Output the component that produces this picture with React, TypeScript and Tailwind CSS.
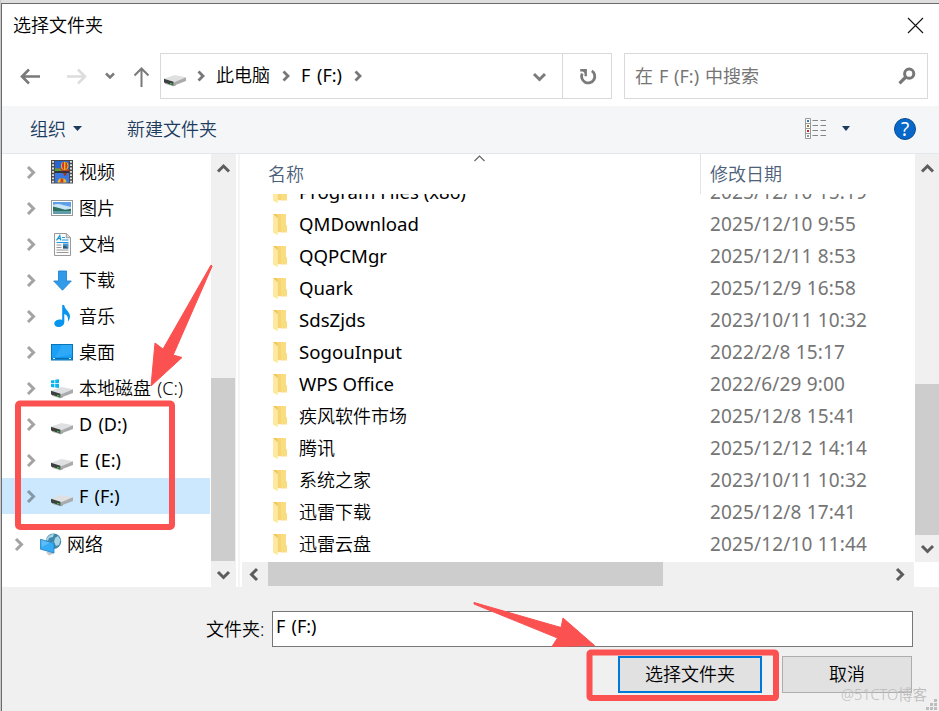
import React from "react";

type ChevronProps = { d: string; w: number; h: number; color: string; sw?: number };

function Stroke({ d, w, h, color, sw = 3 }: ChevronProps) {
  return (
    <svg width={w} height={h} viewBox={`0 0 ${w} ${h}`} className="shrink-0" fill="none" stroke={color} strokeWidth={sw}>
      <path d={d} />
    </svg>
  );
}

function Drive({ win = false }: { win?: boolean }) {
  return (
    <svg width="22" height="24" viewBox="0 0 22 24" className="shrink-0">
      {win && (
        <g fill="#0db4ec">
          <path d="M0 4.4 3.4 3.9V7.2H0ZM4.2 3.8 8 3.2V7.2H4.2ZM0 8.1H3.4V11.4L0 10.9ZM4.2 8.1H8V12.1L4.2 11.5Z" />
        </g>
      )}
      <g transform="translate(0 4)">
        <path d="M0 10.8 10.5 7 22 9.2 9.5 14.5Z" fill="#dfe0e2" />
        <path d="M9.5 14.4 22 9.2V13L9.5 17.7Z" fill="#a9abad" />
        <path d="M0 10.8 9.5 13.8V17.8L0 14.6Z" fill="#3c403e" />
        <path d="M6 14.8 8.5 15.5V16.8L6 16Z" fill="#36c43e" />
        <path d="M1 15.3 9.5 17.8 12 16.8" stroke="#777" strokeWidth=".6" fill="none" />
      </g>
    </svg>
  );
}

function Video() {
  return (
    <svg width="22" height="24" viewBox="0 0 22 24">
      <rect width="22" height="23.5" fill="#4a4a4a" />
      <rect x="4" y="1" width="14" height="10.6" fill="#2866d8" />
      <rect x="4" y="12.4" width="14" height="10.2" fill="#3978e0" />
      <path d="M4 8.8 8 8 18 9.2V11.6H4Z" fill="#c7432d" />
      <path d="M4 8.2 9 8.8 11 11.6H4Z" fill="#55a044" />
      <ellipse cx="13.7" cy="5.8" rx="3.8" ry="4.1" fill="#e7bd22" />
      <path d="M11.6 2.6Q9.8 6 12.2 9L13 9.6 13 2ZM15.5 2.5Q17.6 6 15.2 9L14.4 9.6V2Z" fill="#cf3529" />
      <path d="M4 11H18V13H4Z" fill="#333" />
      <path d="M12 13H16L14.7 15.8H13.2Z" fill="#9f3727" />
      <path d="M6.6 22.6Q6.8 18.2 11 18.2T15.5 22.6Z" fill="#e9b925" />
      <path d="M9.8 18.4H12.3V22.6H9.2Z" fill="#ca3c2c" />
      <g stroke="#eee" strokeWidth="1.8" strokeDasharray="1.8 1.5">
        <path d="M2 1V23M20 1V23" />
      </g>
    </svg>
  );
}

function Picture() {
  return (
    <svg width="22" height="18" viewBox="0 0 22 18">
      <rect x=".5" y="1.5" width="21" height="15" fill="#fff" stroke="#999" />
      <rect x="2" y="3" width="18" height="12" fill="#5f9fe8" />
      <path d="M2 6Q7 4 12 6L20 8V11H2Z" fill="#c7e5f7" />
      <path d="M2 7.5 8 9 14 10.8 20 9.8V12.5H2Z" fill="#2f6f60" />
      <path d="M2 12H20V15H2Z" fill="#5f9dab" />
    </svg>
  );
}

function Doc() {
  return (
    <svg width="17" height="23" viewBox="0 0 17 23">
      <path d="M.5.5H12.5L16.5 4.5V22.5H.5Z" fill="#fbfbfb" stroke="#999" />
      <path d="M12.3.5V4.7H16.5" fill="#ddd" stroke="#999" />
      <path d="M2.5 7.3 5.8 2.5 6.8 7.3M3.8 5.7H6.7" stroke="#1596d1" strokeWidth="1.2" fill="none" />
      <path d="M8 4.5H11M8 7H14.5M2.5 9.5H14.5" stroke="#1c9be0" />
      <path d="M2.5 12H7.5M2.5 14.5H7.5M2.5 17H14.5M2.5 19.5H14.5" stroke="#999" />
      <rect x="9" y="10.5" width="5.5" height="5" fill="#4d91cd" />
      <path d="M9 13.5 11 12.5 14.5 15.5H9Z" fill="#305d76" />
    </svg>
  );
}

function Download() {
  return (
    <svg width="19" height="21" viewBox="0 0 19 21">
      <path d="M5.5 1H13.5V11H18.3L9.5 20.2.7 11H5.5Z" fill="#319be9" stroke="#2585ce" strokeWidth=".9" />
    </svg>
  );
}

function Music() {
  return (
    <svg width="17" height="22" viewBox="0 0 17 22">
      <path d="M8.2 0H10.2C10.5 4.4 16 6.5 16 11.3 16 13.7 14.9 15.6 13.8 16.8 14.7 12.7 13.3 10 10.3 9V17C10.3 20.3 7.4 22 4.5 22 1.8 22 .3 20.5.3 18.6.3 16 3.3 14.5 6.3 14.5 7.1 14.5 7.7 14.7 8.2 14.9Z" fill="#0795ef" />
    </svg>
  );
}

function Desktop() {
  return (
    <svg width="22" height="17" viewBox="0 0 22 17">
      <rect x=".5" y=".5" width="21" height="15.5" fill="#1ba0f7" stroke="#0875b8" />
      <path d="M11 1H21V10L4 14Z" fill="#42b1fa" opacity=".5" />
      <path d="M1 14.5H21" stroke="#0870b2" strokeWidth="1.4" />
      <path d="M2 14.5H4M18 14.5H20" stroke="#d8f0ff" />
    </svg>
  );
}

function Network() {
  return (
    <svg width="22" height="23" viewBox="0 0 22 23">
      <circle cx="13.5" cy="8.3" r="7.7" fill="#3f86aa" />
      <path d="M7 5Q10 1 14 1L13 4 9 5 8 8 6 7ZM15 5 18 3 20.5 7 19 12 16 13 14 9ZM9 10 13 9 14 13 11 14Z" fill="#a6d6e5" />
      <path d="M6 19.5 12 18 14 20.5 9 22.5Z" fill="#c7c9cc" />
      <path d="M.5 6.2 14 10.3V20L.5 16.2Z" fill="#35aaf5" stroke="#2883be" strokeWidth=".8" />
      <path d="M1.2 7.2 10 9.8 2 14Z" fill="#76c9fa" opacity=".6" />
    </svg>
  );
}

function Folder() {
  return (
    <svg width="15" height="22" viewBox="0 0 15 22" className="mt-[2px] shrink-0">
      <path d="M2 0H13V11.5H14V18.2H4Z" fill="#f6d574" />
      <path d="M8 0H13V11.5H14V18.2H8Z" fill="#fadd80" />
      <path d="M0 0 4.8 4.2V21.2L0 18.5Z" fill="#ffe9a2" />
      <path d="M0 0H3.4L4.8 4.2Z" fill="#ecc45f" />
    </svg>
  );
}

const tree = [
  { label: "视频", icon: <Video /> },
  { label: "图片", icon: <Picture /> },
  { label: "文档", icon: <Doc /> },
  { label: "下载", icon: <Download /> },
  { label: "音乐", icon: <Music /> },
  { label: "桌面", icon: <Desktop /> },
  { label: "本地磁盘 (C:)", icon: <Drive win /> },
  { label: "D (D:)", icon: <Drive />, latin: true },
  { label: "E (E:)", icon: <Drive />, latin: true },
  { label: "F (F:)", icon: <Drive />, latin: true, selected: true },
];

const files = [
  ["Program Files (x86)", "2025/12/10 15:19"],
  ["QMDownload", "2025/12/10 9:55"],
  ["QQPCMgr", "2025/12/11 8:53"],
  ["Quark", "2025/12/9 16:58"],
  ["SdsZjds", "2023/10/11 10:32"],
  ["SogouInput", "2022/2/8 15:17"],
  ["WPS Office", "2022/6/29 9:00"],
  ["疾风软件市场", "2025/12/8 15:41"],
  ["腾讯", "2025/12/12 14:14"],
  ["系统之家", "2023/10/11 10:32"],
  ["迅雷下载", "2025/12/8 17:41"],
  ["迅雷云盘", "2025/12/10 11:44"],
];

const UP = "M2 9.5 7.5 4 13 9.5";
const DOWN = "M2 3 7.5 8.5 13 3";
const RIGHT = "M2 2 7.5 7.5 2 13";
const LEFT = "M8 2 2.5 7.5 8 13";
const CRUMB = "M1.5 1.5 6 6 1.5 10.5";

export default function App() {
  return (
    <div className="relative h-[711px] w-[939px] overflow-hidden border-l border-[#c9c9c9] bg-[#dedede] pt-[3px] font-['Noto_Sans','Noto_Sans_CJK_SC',sans-serif] text-[18px] font-[350] leading-[24px] text-black">
      <div className="flex h-[708px] flex-col border-l border-t border-[#6b6b6b] bg-white">
        <header className="flex h-[46px] shrink-0 items-center justify-between pl-[11px] pr-[15px]">
          <span className="pb-[5px]">选择文件夹</span>
          <svg width="17" height="17" viewBox="0 0 17 17" stroke="#111" strokeWidth="1.1" className="mb-[3px]">
            <path d="M1 1 16 16M16 1 1 16" />
          </svg>
        </header>

        <nav className="flex h-[56px] shrink-0 pt-[3px]">
          <div className="flex h-[46px] w-[158px] items-center pl-[18px]">
            <Stroke w={21} h={17} color="#7a7a7a" sw={2.6} d="M9 1.5 2 8.5 9 15.5M2 8.5H20" />
            <div className="ml-[25px] flex">
              <Stroke w={21} h={17} color="#dddddd" sw={2.6} d="M12 1.5 19 8.5 12 15.5M19 8.5H1" />
            </div>
            <div className="ml-[18px] flex">
              <Stroke w={10} h={8} color="#7a7a7a" sw={2.5} d="M1 1.5 5 5.5 9 1.5" />
            </div>
            <div className="ml-[18px] mt-[2px] flex">
              <Stroke w={17} h={20} color="#7a7a7a" sw={2} d="M1.5 8.5 8.5 1.5 15.5 8.5M8.5 1.5V20" />
            </div>
          </div>
          <div className="flex h-[46px] w-[452px] border border-[#d9d9d9]">
            <div className="flex flex-1 items-center pl-[3px]">
              <Drive />
              <div className="ml-[11px] flex"><Stroke w={8} h={12} color="#777" sw={2.8} d={CRUMB} /></div>
              <span className="ml-[11px] pb-[2px]">此电脑</span>
              <div className="ml-[12px] flex"><Stroke w={8} h={12} color="#777" sw={2.8} d={CRUMB} /></div>
              <span className="ml-[11px] w-[41px] whitespace-nowrap pb-[2px] font-normal [word-spacing:2px]">F (F:)</span>
              <div className="ml-[12px] flex"><Stroke w={8} h={12} color="#777" sw={2.8} d={CRUMB} /></div>
              <div className="ml-auto mr-[15px] mt-[1px] flex"><Stroke w={15} h={11} color="#7b7b7b" sw={3} d={DOWN} /></div>
            </div>
            <div className="flex w-[49px] items-center justify-center border-l border-[#d9d9d9]">
              <svg width="18" height="18" viewBox="0 0 18 18" className="ml-[1px] mt-[2px]" fill="none" stroke="#7b7b7b" strokeWidth="2.8">
                <path d="M12.8 2.8A6.6 6.6 0 1 1 3.2 5.5" />
                <path d="M1.2 2.2H6.7V8.2" strokeWidth="2.4" />
                <path d="M3 2.5H6.5V6Z" fill="#7b7b7b" stroke="none" />
              </svg>
            </div>
          </div>
          <div className="ml-[12px] flex h-[46px] w-[304px] items-center justify-between border border-[#d9d9d9] pl-[10px] pr-[11px] text-[#757575]">
            <span className="font-normal [word-spacing:1.2px]">在 F (F:) 中搜索</span>
            <svg width="18" height="18" viewBox="0 0 18 18" fill="none" stroke="#777">
              <circle cx="11.2" cy="6.7" r="4.6" strokeWidth="3" />
              <path d="M7.8 10 1.5 16.3" strokeWidth="3.2" />
            </svg>
          </div>
        </nav>

        <div className="flex h-[48px] shrink-0 items-center border-b border-[#e4e7ea] bg-[#f4f6f8] pb-[2px] pl-[28px] pr-[23px] text-[#1c3c5e]">
          <span>组织</span>
          <svg width="9" height="5" className="ml-[7px]"><path d="M0 0H9L4.5 5Z" fill="#1c3c5e" /></svg>
          <span className="ml-[45px]">新建文件夹</span>
          <svg width="22" height="22" viewBox="0 0 22 22" className="ml-auto">
            <path d="M.5.5H5.5V20.5H.5ZM.5 5.5H5.5M.5 10.5H5.5M.5 15.5H5.5" fill="#fff" stroke="#999" />
            <path d="M7.5 2.5H13M15.5 2.5H21M7.5 7.5H13M15.5 7.5H21M7.5 12.5H13M15.5 12.5H21M7.5 17.5H13M15.5 17.5H21" stroke="#858585" />
            <path d="M2 2H4V4H2Z" fill="#3878aa" />
            <path d="M2 7H4V9H2Z" fill="#9a8138" />
            <path d="M2 12H4V14H2Z" fill="#cd2424" />
            <path d="M2 17H4V19H2Z" fill="#78a58b" />
          </svg>
          <svg width="8" height="5" className="ml-[15px]"><path d="M0 0H8L4 5Z" fill="#1c3c5e" /></svg>
          <div className="ml-[44px] flex h-[22px] w-[22px] items-center justify-center rounded-full border border-[#0a4c90] bg-[#0868c9] text-[19px] font-normal leading-[20px] text-white">?</div>
        </div>

        <main className="flex h-[433px] shrink-0">
          <div className="w-[208px]">
            {tree.map((t) => (
              <div key={t.label} className={`flex h-[36px] items-center ${t.selected ? "bg-[#cce8ff]" : ""}`}>
                <div className="flex w-[49px] pl-[24px]">
                  <Stroke w={10} h={15} color={t.selected ? "#8498a8" : "#a3a3a3"} d={RIGHT} />
                </div>
                <div className="flex w-[22px] justify-center">{t.icon}</div>
                <span className={`ml-[6px] whitespace-nowrap [word-spacing:1.6px] ${t.latin ? "font-normal" : ""}`}>{t.label}</span>
              </div>
            ))}
            <div className="mt-[12px] flex h-[36px] items-center">
              <div className="flex w-[38px] pl-[12px]"><Stroke w={10} h={15} color="#a3a3a3" d={RIGHT} /></div>
              <Network />
              <span className="ml-[5px]">网络</span>
            </div>
          </div>
          <div className="ml-[1px] flex w-[25px] flex-col bg-[#f0f0f0]">
            <div className="flex h-[224px] justify-center pt-[8px]"><Stroke w={15} h={12} color="#5d5d5d" d={UP} /></div>
            <div className="h-[183px] w-[24px] bg-[#cdcdcd]" />
            <div className="flex h-[26px] justify-center pt-[8px]"><Stroke w={15} h={12} color="#5d5d5d" d={DOWN} /></div>
          </div>
          <div className="ml-[2px] w-[2px] bg-[#f5f5f5]" />

          <section className="flex flex-1 flex-col pl-[2px]">
            <div className="flex h-[408px]">
              <div className="flex flex-1 flex-col">
                <div className="flex h-[40px] text-[#4c607a]">
                  <div className="flex w-[459px] justify-between border-r border-[#e5e5e5] pl-[26px] pr-[214px]">
                    <span className="pt-[8px]">名称</span>
                    <Stroke w={13} h={9} color="#666" sw={1.2} d="M1.5 7 6.5 2 11.5 7" />
                  </div>
                  <span className="pl-[9px] pt-[8px]">修改日期</span>
                </div>
                <div className="flex h-[368px] flex-col justify-end overflow-hidden pb-[2px]">
                  {files.map(([name, date]) => (
                    <div key={name} className="flex h-[32px] shrink-0 items-center pl-[31px]">
                      <Folder />
                      <span className={`ml-[11px] w-[411px] whitespace-nowrap ${/^[A-Z]/.test(name) ? "text-[18.6px] font-normal" : ""}`}>{name}</span>
                      <span className="whitespace-nowrap text-[19px] font-normal tracking-[0.15px] text-[#757575]">{date}</span>
                    </div>
                  ))}
                </div>
              </div>
              <div className="flex w-[24px] flex-col bg-[#f0f0f0]">
                <div className="flex h-[230px] justify-center pt-[8px]"><Stroke w={15} h={12} color="#5d5d5d" d={UP} /></div>
                <div className="h-[151px] bg-[#cdcdcd]" />
                <div className="flex h-[27px] justify-center pt-[8px]"><Stroke w={15} h={12} color="#5d5d5d" d={DOWN} /></div>
              </div>
            </div>
            <div className="mr-[25px] flex h-[25px] items-center bg-[#f0f0f0]">
              <div className="flex w-[26px] pl-[7px]"><Stroke w={10} h={15} color="#5d5d5d" d={LEFT} /></div>
              <div className="mb-[1px] h-[24px] w-[395px] bg-[#cdcdcd]" />
              <div className="ml-auto mr-[9px] flex"><Stroke w={10} h={15} color="#5d5d5d" d={RIGHT} /></div>
            </div>
          </section>
        </main>

        <footer className="flex-1 bg-[#f0f0f0] pt-[24px]">
          <div className="flex h-[36px] items-center">
            <span className="w-[270px] pl-[204px]">文件夹:</span>
            <div className="h-[36px] w-[641px] border border-[#767676] bg-white pl-[3px] pt-[2px] font-normal [word-spacing:1.5px]">F (F:)</div>
          </div>
          <div className="mt-[9px] flex pl-[616px]">
            <button className="h-[37px] w-[144px] border-2 border-[#0078d7] bg-[#e1e1e1] pb-[1px] leading-[24px]">选择文件夹</button>
            <button className="ml-[20px] h-[37px] w-[130px] border border-[#adadad] bg-[#e1e1e1] pb-[1px] leading-[24px]">取消</button>
          </div>
        </footer>
      </div>

      <svg className="pointer-events-none absolute -left-px top-0" width="939" height="711" viewBox="0 0 939 711">
        <rect x="18" y="403.5" width="154" height="123.5" rx="2" fill="none" stroke="#fb5151" strokeWidth="6" />
        <rect x="589.5" y="652.5" width="186.5" height="45.5" rx="1.5" fill="none" stroke="#fb5151" strokeWidth="6" />
        <path d="M211 265 212.2 266 173.2 355 182 357.5 151 386 155 343 163 349Z" fill="#fb5151" stroke="#fb5151" strokeLinejoin="round" />
        <path d="M474 602.5 561 627.5 563 618 594.5 645.5 552 646.5 557.5 638 474 604Z" fill="#fb5151" stroke="#fb5151" strokeLinejoin="round" />
        <g fill="#bdbdbd">
          <path d="M934 699h3v3h-3zM930 703h3v3h-3zM934 703h3v3h-3zM926 707h3v3h-3zM930 707h3v3h-3zM934 707h3v3h-3z" />
        </g>
      </svg>
      <span className="absolute left-[840px] top-[684px] whitespace-nowrap text-[14.5px] leading-[20px] text-[#bcbcbc]">@51CTO博客</span>
    </div>
  );
}
